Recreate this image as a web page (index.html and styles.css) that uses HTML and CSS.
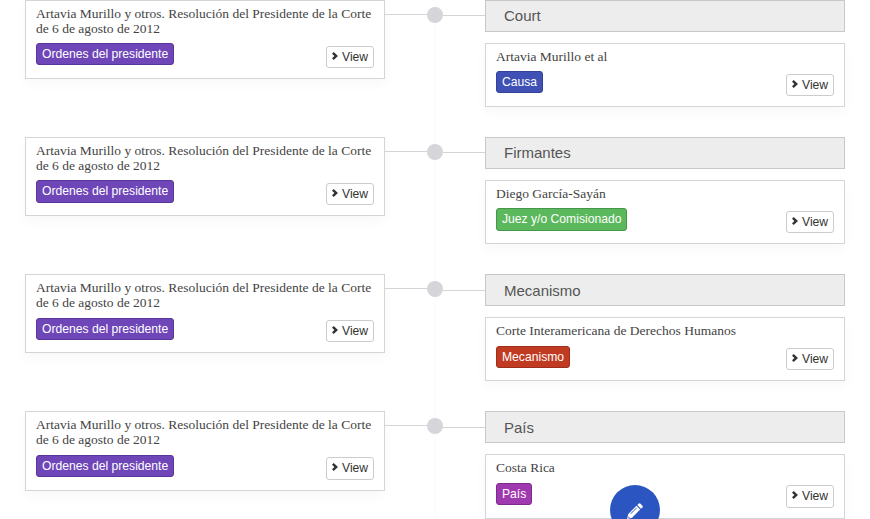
FILE: index.html
```html
<!DOCTYPE html>
<html lang="es">
<head>
<meta charset="utf-8">
<title>Artavia Murillo</title>
<link rel="stylesheet" href="styles.css">
</head>
<body>
<svg class="defs" width="0" height="0"><symbol id="chevron" viewBox="0 0 7 8"><path d="M0 1.700 1.700 0 6 4 1.700 8 0 6.300 2.400 4z" fill="#333"/></symbol></svg>
<main class="timeline">
  <section class="row">
    <article class="card source"><h2>Artavia Murillo y otros. Resolución del Presidente de la Corte de 6 de agosto de 2012</h2><div class="meta"><span class="tag order">Ordenes del presidente</span><a class="view"><svg><use href="#chevron"/></svg>View</a></div></article>
    <div class="link"><i class="left-line"></i><b class="dot"></b><i class="right-line"></i></div>
    <div class="group"><h1>Court</h1><article class="card"><h2>Artavia Murillo et al</h2><div class="meta"><span class="tag cause">Causa</span><a class="view"><svg><use href="#chevron"/></svg>View</a></div></article></div>
  </section>
  <section class="row">
    <article class="card source"><h2>Artavia Murillo y otros. Resolución del Presidente de la Corte de 6 de agosto de 2012</h2><div class="meta"><span class="tag order">Ordenes del presidente</span><a class="view"><svg><use href="#chevron"/></svg>View</a></div></article>
    <div class="link"><i class="left-line"></i><b class="dot"></b><i class="right-line"></i></div>
    <div class="group"><h1>Firmantes</h1><article class="card"><h2>Diego García-Sayán</h2><div class="meta"><span class="tag judge">Juez y/o Comisionado</span><a class="view"><svg><use href="#chevron"/></svg>View</a></div></article></div>
  </section>
  <section class="row">
    <article class="card source"><h2>Artavia Murillo y otros. Resolución del Presidente de la Corte de 6 de agosto de 2012</h2><div class="meta"><span class="tag order">Ordenes del presidente</span><a class="view"><svg><use href="#chevron"/></svg>View</a></div></article>
    <div class="link"><i class="left-line"></i><b class="dot"></b><i class="right-line"></i></div>
    <div class="group"><h1>Mecanismo</h1><article class="card"><h2>Corte Interamericana de Derechos Humanos</h2><div class="meta"><span class="tag mechanism">Mecanismo</span><a class="view"><svg><use href="#chevron"/></svg>View</a></div></article></div>
  </section>
  <section class="row">
    <article class="card source"><h2>Artavia Murillo y otros. Resolución del Presidente de la Corte de 6 de agosto de 2012</h2><div class="meta"><span class="tag order">Ordenes del presidente</span><a class="view"><svg><use href="#chevron"/></svg>View</a></div></article>
    <div class="link"><i class="left-line"></i><b class="dot"></b><i class="right-line"></i></div>
    <div class="group"><h1>País</h1><article class="card"><h2>Costa Rica</h2><div class="meta"><span class="tag country">País</span><a class="view"><svg><use href="#chevron"/></svg>View</a></div></article></div>
  </section>
</main>
<button class="edit" aria-label="Editar"><svg width="18" height="18" viewBox="0 0 18 18"><path d="M1 17l1.300-5L10.500 3.800l3.700 3.700L6 15.700z" fill="#fff"/><path d="M11.300 3l1.500-1.500q.7-.6 1.400 0l2.300 2.300q.6.700 0 1.400L15 6.700z" fill="#fff"/><path d="M4.700 11.800l6-6M2 14.600l1.400 1.400" stroke="#2b56c1" stroke-width="1"/></svg></button>
</body>
</html>
```
FILE: styles.css
```css
* { box-sizing: border-box; }
body { margin: 0; background: #fff; font-family: "Liberation Sans", Arial, sans-serif; }
.defs { position: absolute; }
.timeline { height: 519px; padding: 0 25px; overflow: hidden; }
.row { display: grid; grid-template-columns: 360px 100px 360px; align-items: start; height: 137.14px; }
.card { height: 64.14px; padding: 5px 10px 0; border: 1px solid #d5d5d9; background: #fff; box-shadow: 0 5px 12px rgba(0,0,0,.03); }
.card.source { height: 79.14px; }
h1 { height: 32px; margin: 0 0 11px; padding: .25px 18px 0; border: 1px solid #c8c8ca; background: #ededed; color: #555; font-size: 15px; font-weight: 400; line-height: 30px; }
h2 { margin: 0; color: #444; font: 400 13.5px/15px "Liberation Serif", serif; }
.meta { display: flex; justify-content: space-between; align-items: flex-start; padding-top: 7.25px; }
.tag { height: 22.14px; padding: 0 5px; border: 1px solid; border-radius: 3px; color: #fff; font-size: 12.15px; line-height: 20px; }
.order { background: #6e46b8; border-color: #58359a; }
.cause { background: #3f51b5; border-color: #32419a; }
.judge { background: #5cb85c; border-color: #449648; }
.mechanism { background: #c13a22; border-color: #9c2e1b; }
.country { background: #9f39af; border-color: #7e2c8b; }
.view { display: flex; align-items: center; width: 48px; height: 22.14px; margin-top: 2.8px; padding-left: 5px; border: 1px solid #ccc; border-radius: 3px; color: #333; font-size: 12.15px; line-height: 20px; }
.view svg { width: 7px; height: 8px; margin: -2px 3px 0 0; }
.link { display: grid; grid-template-columns: 42px 16px 42px; align-self: stretch; align-items: start; background: linear-gradient(#fafafa, #fafafa) 50px 0 / 1px 100% no-repeat; }
.link i { height: 1px; background: #d5d5d9; }
.left-line { margin-top: 14px; }
.link .right-line { margin-top: 15.25px; }
.dot { width: 16px; height: 16px; margin-top: 7px; border-radius: 50%; background: #d5d5da; }
.edit { position: fixed; top: 485px; left: 610px; width: 50px; height: 50px; padding: 0; border: 0; border-radius: 50%; background: #2b56c1; display: grid; place-items: center; }
.edit svg { margin-top: 2px; }
```
